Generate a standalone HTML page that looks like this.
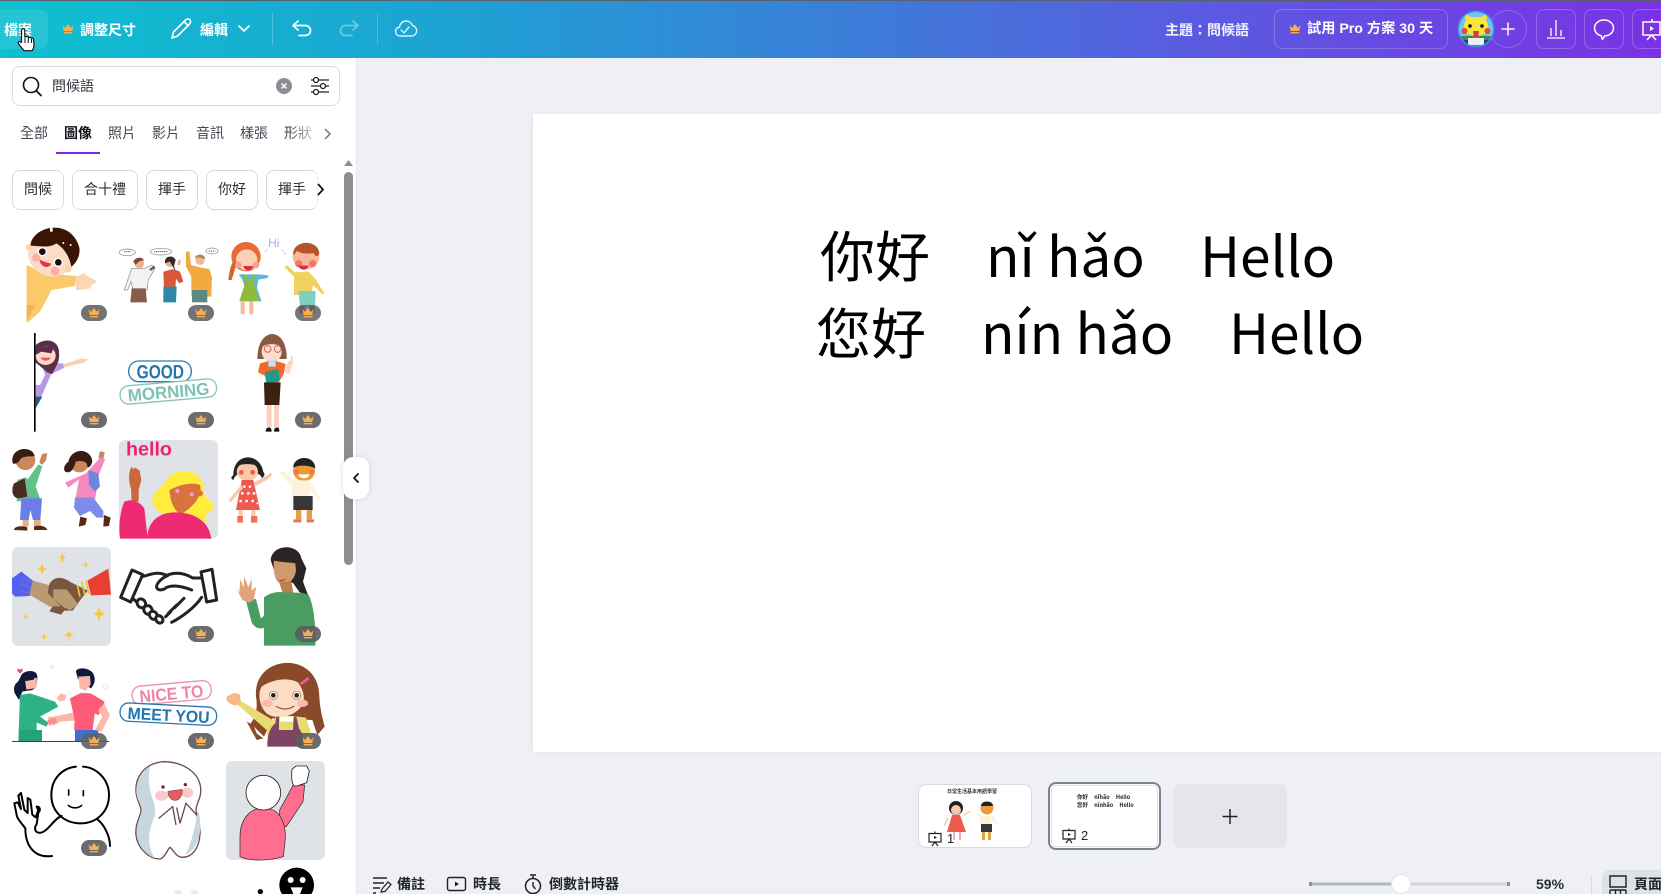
<!DOCTYPE html>
<html lang="zh-Hant"><head><meta charset="utf-8"><title>Canva 問候語</title>
<style>
html,body{margin:0;padding:0;width:1661px;height:894px;overflow:hidden;background:#eff0f5;font-family:"Liberation Sans","Noto Sans CJK TC",sans-serif;color:#0e1318}
.a{position:absolute;white-space:nowrap;line-height:1}
.b{position:absolute;box-sizing:border-box}
.t{font-weight:700;color:#fff;font-size:14px}
.cjk{font-family:"Noto Sans CJK TC","Liberation Sans",sans-serif}
.tab{font-size:14px;top:126px;color:#40474f}
.chip{position:absolute;top:170px;height:40px;border:1px solid #d6d9de;border-radius:8px;box-sizing:border-box;background:#fff;font-size:14px;line-height:36px;text-align:center;color:#2a3037}
.canvas span{position:absolute;white-space:nowrap;font-family:"Noto Sans CJK TC",sans-serif;font-size:55px;line-height:1;color:#000}
svg{position:absolute;overflow:visible}
.bot{font-size:14px;font-weight:700;top:877px;color:#20262c}
</style></head><body>

<!-- workspace -->
<div class="b" style="left:533px;top:114px;width:1128px;height:638px;background:#fff;box-shadow:0 0 6px rgba(60,70,90,.08)"></div>
<div class="canvas">
<span style="left:820px;top:226px">你好</span><span style="left:986px;top:226px">nǐ hǎo</span><span style="left:1200px;top:226px">Hello</span>
<span style="left:816px;top:303px">您好</span><span style="left:981px;top:303px">nín hǎo</span><span style="left:1229px;top:303px">Hello</span>
</div>

<!-- top bar -->
<div class="b" style="left:0;top:0;width:1661px;height:58px;background:linear-gradient(90deg,#0fc0cf 0%,#1aa6d2 24%,#3a7fd8 50%,#5a5be0 72%,#7a32e4 100%)"></div>
<div class="b" style="left:0;top:0;width:1661px;height:1px;background:#58606c"></div>
<div class="b" style="left:-6px;top:9px;width:54px;height:40px;border-radius:8px;background:rgba(255,255,255,.09)"></div>
<div class="a t" style="left:4px;top:23px">檔案</div>
<div class="a t" style="left:80px;top:23px">調整尺寸</div>
<div class="a t" style="left:200px;top:23px">編輯</div>
<div class="a t" style="left:1165px;top:23px;opacity:.93">主題：問候語</div>
<div class="b" style="left:1274px;top:9px;width:174px;height:40px;border:1px solid rgba(255,255,255,.22);border-radius:8px"></div>
<div class="a t" style="left:1307px;top:22px;font-size:14.2px">試用 Pro 方案 30 天</div>
<div class="b" style="left:1489px;top:10px;width:38px;height:38px;border:1px solid rgba(255,255,255,.22);border-radius:50%"></div>
<div class="b" style="left:1536px;top:9px;width:40px;height:40px;border:1px solid rgba(255,255,255,.22);border-radius:8px"></div>
<div class="b" style="left:1584px;top:9px;width:40px;height:40px;border:1px solid rgba(255,255,255,.22);border-radius:8px"></div>
<div class="b" style="left:1632px;top:9px;width:40px;height:40px;border:1px solid rgba(255,255,255,.22);border-radius:8px"></div>
<div class="b" style="left:272px;top:13px;width:1px;height:32px;background:rgba(255,255,255,.22)"></div>
<div class="b" style="left:377px;top:13px;width:1px;height:32px;background:rgba(255,255,255,.22)"></div>

<svg style="left:0;top:0" width="1661" height="60" viewBox="0 0 1661 60" fill="none">
<defs>
<g id="crown"><path d="M-5.5 -4 L-3 -1 L0 -5 L3 -1 L5.5 -4 L4.3 2 H-4.3Z M-4.2 3 H4.2 V4.4 H-4.2Z" fill="#f7ae57"/></g>
</defs>
<use href="#crown" x="68" y="29"/><use href="#crown" x="1295" y="29"/>
<path d="M172 38l1.500-6 12-12c1.500-1.500 3.300-1.300 4.300-.2s1.200 2.800-.2 4.200l-12 12z M184 21.500l4 4" stroke="#fff" stroke-width="1.600" stroke-linejoin="round"/>
<path d="M239 26l5 5 5-5" stroke="#fff" stroke-width="1.700" stroke-linecap="round" stroke-linejoin="round"/>
<path d="M298 21l-5 4.500 5 4.500 M293.500 25.500H305c3.500 0 5.500 2.300 5.500 5s-2 5-5.500 5h-6" stroke="#fff" stroke-width="1.700" stroke-linecap="round" stroke-linejoin="round"/>
<path d="M353 21l5 4.500-5 4.500 M357.500 25.500H346c-3.500 0-5.500 2.300-5.500 5s2 5 5.500 5h6" stroke="#fff" stroke-opacity=".38" stroke-width="1.700" stroke-linecap="round" stroke-linejoin="round"/>
<path d="M402 36h-2c-2.500 0-4.500-2-4.500-4.500 0-2.300 1.700-4.200 4-4.500 .5-3.500 3.300-6 6.700-6 3 0 5.500 1.900 6.400 4.600 2.400.4 4 2.600 4 5 0 3-2.200 5.400-5 5.400z" stroke="#fff" stroke-opacity=".85" stroke-width="1.400"/>
<path d="M401 30l3 3 5-6" stroke="#fff" stroke-opacity=".85" stroke-width="1.400" stroke-linecap="round"/>
<!-- avatar -->
<circle cx="1476" cy="29" r="18.500" fill="#3f8ff0"/>
<clipPath id="av"><circle cx="1476" cy="29" r="17"/></clipPath>
<g clip-path="url(#av)">
<rect x="1458" y="11" width="36" height="36" fill="#6ec6ee"/>
<rect x="1458" y="36" width="36" height="12" fill="#3f8a4f"/>
<path d="M1466 20l-3-8 8 5h10l8-5-3 8c3 4 3 10 0 13-4 3-16 3-20 0-3-3-3-9 0-13z" fill="#f8e33c"/>
<circle cx="1470" cy="26" r="1.800" fill="#111"/><circle cx="1482" cy="26" r="1.800" fill="#111"/>
<circle cx="1464.500" cy="31" r="3" fill="#e8463a"/><circle cx="1487.500" cy="31" r="3" fill="#e8463a"/>
<path d="M1473 31h6l-1 6h-4z" fill="#d83a4c"/>
<path d="M1468 38h16v7h-16z" fill="#eee"/><path d="M1460 40h8v8h-8zM1484 40h8v8h-8z" fill="#243c8c"/>
</g>
<path d="M1508 23v12M1502 29h12" stroke="#fff" stroke-opacity=".95" stroke-width="1.500" stroke-linecap="round"/>
<path d="M1547 38h18M1551 36V28M1556 36V20M1561 36V30" stroke="#fff" stroke-width="1.300"/>
<path d="M1604 20c5.500 0 9.500 3.700 9.500 8s-4 8-9 8l-2 3.500-1.500-3.800c-4-1-6.500-4.100-6.500-7.700 0-4.300 4-8 9.500-8z" stroke="#fff" stroke-width="1.500" stroke-linejoin="round"/>
<path d="M1643 22h17v13h-17z M1652 19v3 M1647 40l4.500-5 M1656 40l-4.500-5" stroke="#fff" stroke-width="1.500"/>
<path d="M1650 26l4 2.500-4 2.500z" fill="#fff"/>
</svg>

<!-- sidebar -->
<div class="b" style="left:0;top:58px;width:357px;height:836px;background:#fff;border-right:1px solid #e4e6ea"></div>
<div class="b" style="left:12px;top:66px;width:328px;height:40px;border:1px solid #d8dae0;border-radius:8px;background:#fff"></div>
<div class="a" style="left:52px;top:79px;font-size:14px;color:#2f353b">問候語</div>
<div class="a tab" style="left:20px">全部</div>
<div class="a tab" style="left:64px;color:#0e1318;font-weight:700">圖像</div>
<div class="a tab" style="left:108px">照片</div>
<div class="a tab" style="left:152px">影片</div>
<div class="a tab" style="left:196px">音訊</div>
<div class="a tab" style="left:240px">樣張</div>
<div class="a tab" style="left:284px;background:linear-gradient(90deg,#40474f 20%,#c4c6ca);-webkit-background-clip:text;background-clip:text;color:transparent">形狀</div>
<div class="b" style="left:56px;top:152px;width:44px;height:2px;background:#7d2ae8"></div>
<div class="chip" style="left:12px;width:52px">問候</div>
<div class="chip" style="left:72px;width:66px">合十禮</div>
<div class="chip" style="left:146px;width:52px">揮手</div>
<div class="chip" style="left:206px;width:52px">你好</div>
<div class="chip" style="left:266px;width:52px;border-right-color:#eee">揮手</div>
<div class="b" style="left:344px;top:172px;width:9px;height:393px;border-radius:5px;background:#8e8e8e"></div>

<svg style="left:0;top:0" width="357" height="894" viewBox="0 0 357 894" fill="none">
<circle cx="31" cy="85" r="7.500" stroke="#111" stroke-width="1.600"/><path d="M36.500 91l4.500 4.500" stroke="#111" stroke-width="1.800" stroke-linecap="round"/>
<circle cx="284" cy="86" r="8" fill="#8b8f94"/><path d="M281.500 83.500l5 5m0-5l-5 5" stroke="#fff" stroke-width="1.500"/>
<path d="M311 80h18M311 86h18M311 92h18" stroke="#222" stroke-width="1.300"/>
<circle cx="316" cy="80" r="2.500" fill="#fff" stroke="#222" stroke-width="1.300"/><circle cx="323" cy="86" r="2.500" fill="#fff" stroke="#222" stroke-width="1.300"/><circle cx="316" cy="92" r="2.500" fill="#fff" stroke="#222" stroke-width="1.300"/>
<path d="M325 129l5 5-5 5" stroke="#777" stroke-width="1.500"/>
<path d="M318 184l5 5.500-5 5.500" stroke="#111" stroke-width="1.700"/>
<path d="M344 166l4.500-6 4.500 6z" fill="#8e8e8e"/>

<!-- ZOOM 3 SPACE -->
<g transform="translate(0 215) scale(.33333)">
<!-- boy -->
<path d="M80 150l55 25 95 8-5 30-70 12-35 65-40 35z" fill="#fbc96a"/>
<path d="M80 270l25 0-25 50z" fill="#f2b552"/>
<path d="M228 186l27-13 4 8 29 16-2 8-10 4-6 12-42 5z" fill="#fdd6b6"/>
<ellipse cx="158" cy="112" rx="74" ry="72" fill="#fcdcc4"/><circle cx="86" cy="97" r="9" fill="#fcd0b0"/><circle cx="205" cy="162" r="10" fill="#fcd0b0"/>
<path d="M92 92c0-55 118-90 146 5 4 25-10 48-24 58-5-28-20-55-45-70-22 15-50 8-77 7z" fill="#3a1506"/>
<circle cx="127" cy="110" r="14" fill="#fff"/><circle cx="127" cy="110" r="10" fill="#111"/><circle cx="175" cy="142" r="14" fill="#fff"/><circle cx="175" cy="142" r="10" fill="#111"/>
<path d="M118 134c15 6 25 10 36 12-6 14-30 16-36-12z" fill="#df3648"/>
<circle cx="108" cy="128" r="12" fill="#f8b0a8"/><circle cx="165" cy="168" r="13" fill="#f8b0a8"/>
<rect x="150" y="38" width="8" height="12" fill="#fff"/><circle cx="190" cy="84" r="3" fill="#fff"/><circle cx="212" cy="90" r="3" fill="#fff"/>
<!-- three people -->
<ellipse cx="382" cy="112" rx="24" ry="10" fill="#fff" stroke="#888" stroke-width="2"/><ellipse cx="483" cy="110" rx="32" ry="10" fill="#fff" stroke="#888" stroke-width="2"/><ellipse cx="636" cy="108" rx="18" ry="9" fill="#fff" stroke="#888" stroke-width="2"/>
<path d="M372 110h20M462 110h42M626 108h20" stroke="#666" stroke-width="3" stroke-dasharray="4 2"/>
<circle cx="418" cy="146" r="14" fill="#e8b090"/><path d="M400 140c5-15 30-15 32-3-15-3-18 8-26 12z" fill="#7a4a30"/>
<path d="M395 160l40 0 20-10 10 10-20 35-4 30h-42l-6-25-10 25-10 0z" fill="#f2f2f2" stroke="#888" stroke-width="2"/>
<path d="M395 220h42l4 42h-50z" fill="#8a5a4a"/><path d="M450 165l14-10" stroke="#555" stroke-width="7"/>
<circle cx="510" cy="142" r="14" fill="#e8b090"/><path d="M495 145c-4-22 24-28 32-10l-5 18 5 15-10-15-8-14c-6 4-12 4-14 6z" fill="#3a2a2a"/>
<path d="M490 170l30-8 20 8 10 30-12 5-10-14-2 30h-34z" fill="#d9583a"/>
<path d="M490 215h40l-2 47h-38z" fill="#2f86a8"/><path d="M535 150l5-15" stroke="#e8b090" stroke-width="8"/>
<circle cx="600" cy="136" r="14" fill="#edbb95"/><path d="M584 130c5-16 30-14 32 2-12-2-20-8-32-2z" fill="#c08050"/>
<path d="M558 155l0-45 10 0 5 40 30 8 25 4 8 25-2 58h-60l0-60z" fill="#f2a93f"/>
<path d="M576 225h46v37h-46z" fill="#5d8a80"/>
<!-- hi kids -->
<text x="804" y="95" font-family="Liberation Sans" font-size="36" fill="#b8a4e6" transform="rotate(3 804 95)">Hi</text>
<path d="M794 112l10-10M858 120l-14-18" stroke="#c9bbe8" stroke-width="2"/>
<circle cx="738" cy="125" r="44" fill="#e96a35"/><ellipse cx="740" cy="135" rx="32" ry="32" fill="#fbd0b4"/>
<path d="M700 140c-8 10-12 30-15 55l10 0c5-15 10-35 15-45z" fill="#d8622f"/><circle cx="715" cy="150" r="10" fill="#f4a090"/><circle cx="768" cy="150" r="10" fill="#f4a090"/><path d="M730 153h30c-5 18-26 18-30 0z" fill="#dc2e3e"/>
<path d="M716 178h60l30 3-3 8-28 5-4 25 14 40h-64l14-40-8-25z" fill="#62b8d0"/>
<path d="M730 178l5 0 8 18 8 0 8-18 5 0-2 30 16 50h-60l16-50z" fill="#8dbb3a"/>
<path d="M722 258h12v40h-12zM748 258h12v40h-12z" fill="#f8b8a0"/>
<ellipse cx="918" cy="125" rx="40" ry="38" fill="#fbb898"/><path d="M880 120c-5-45 75-50 78-4-6 12-12 8-18-2-20 5-40 0-50-6-3 6-6 10-10 12z" fill="#b5552a"/><circle cx="896" cy="146" r="11" fill="#f07868"/><circle cx="938" cy="146" r="11" fill="#f07868"/><path d="M894 152h32c-6 18-26 14-32 0z" fill="#d82e3e"/>
<path d="M860 150l25 22 40-2 20 20 28 45-6 3-28-28-5 30h-52l0-55-28-28z" fill="#efd15f"/>
<path d="M895 228h52l-2 45h-45z" fill="#7dd0c0"/><path d="M898 273h16v23h-16zM928 273h16v23h-16z" fill="#a83030"/>
<!-- peek girl -->
<rect x="102" y="354" width="5" height="296" fill="#000"/>
<path d="M107 440l28 5 55 0 2 14-38 18-30 68-17 25z" fill="#b79be2"/><path d="M107 445l20 5 8 30-15 30-13 0z" fill="#fff"/>
<path d="M107 545h20l-20 35z" fill="#2f5a80"/><path d="M190 448l55-18 20 3-15 10-58 14z" fill="#fcd0b0"/>
<path d="M107 390c30-25 72-15 70 25 3 25-10 40-20 62l-15-5-35-30z" fill="#5a2f4a"/><ellipse cx="137" cy="422" rx="30" ry="28" fill="#fcd9c4"/><path d="M107 395l55 0-8 20-30-5-17 10z" fill="#5a2f4a"/><path d="M122 428h30c-5 12-25 12-30 0z" fill="#e85070"/>
<!-- good morning -->
<rect x="386" y="438" width="188" height="62" rx="30" fill="#fff" stroke="#2a7ab0" stroke-width="4"/>
<text x="410" y="491" font-family="Liberation Sans" font-weight="700" font-size="58" textLength="142" lengthAdjust="spacingAndGlyphs" fill="#2076ad">GOOD</text>
<g transform="rotate(-5 505 530)"><rect x="360" y="502" width="290" height="55" rx="26" fill="#fff" stroke="#86c5b8" stroke-width="4"/>
<text x="383" y="549" font-family="Liberation Sans" font-weight="700" font-size="52" textLength="245" lengthAdjust="spacingAndGlyphs" fill="#7ec2b2">MORNING</text></g>
<!-- teacher -->
<path d="M772 432c0-100 90-100 88 0z" fill="#8a5a40"/><ellipse cx="815" cy="410" rx="30" ry="32" fill="#fcdccc"/><path d="M785 395c10-25 50-25 60 0-20-10-40-10-60 0z" fill="#8a5a40"/>
<circle cx="803" cy="402" r="10" fill="none" stroke="#c85050" stroke-width="2.500"/><circle cx="833" cy="402" r="10" fill="none" stroke="#c85050" stroke-width="2.500"/>
<path d="M780 445l30-8 15 0 32 10-6 30-15 25h-36l-6-20-20-10z" fill="#f26a2a"/><path d="M805 435h22v20h-22z" fill="#c9dff0"/>
<path d="M795 470l40-7 4 35-40 12z" fill="#1f9a8f"/><path d="M792 502h50l-4 68h-44z" fill="#3d2010"/>
<path d="M800 570h15v68h-15zM822 570h15v68h-15z" fill="#fbcfc0"/><path d="M797 650c0-10 5-12 10-12s8 4 8 12zM822 650c0-10 5-12 10-12s6 4 6 12z" fill="#111"/>
<path d="M852 470l12-30 10-5-4-10 7-4 3 18-12 40z" fill="#fcd8c4"/>
<!-- kids backpack -->
<circle cx="76" cy="735" r="30" fill="#c9875a"/><path d="M38 745c-10-50 60-55 66-22-20 2-32 0-42 8-5 12-16 18-24 14z" fill="#3a1d12"/>
<path d="M52 795l25-8 6 6 32-45 12 6-20 60 14 40-3 5h-68z" fill="#62c088"/><path d="M118 742l8-25 16-3-4 22-12 14z" fill="#c9875a"/>
<path d="M42 805c-10 20-5 45 15 45l25-5-8-55z" fill="#4a2b22"/><path d="M64 850h62l-5 65h-22l-8-30-5 30h-26z" fill="#6a7de8"/>
<path d="M68 915h18v20h-18zM102 915h20v20h-20z" fill="#e4b080"/><path d="M42 945c0-12 25-14 40-8v10zM102 935c12-6 35-4 40 10h-40z" fill="#5a2a18"/>
<circle cx="238" cy="742" r="30" fill="#c9875a"/><path d="M195 770c-8-15 5-25 10-30 10-45 70-40 72 0-5 15-10 20-15 15 0-15-15-20-35-15-5 22-15 38-32 30z" fill="#3a1d12"/>
<path d="M258 775l45-50 12 8-20 50-10 75h-60l12-65-32 25-10-15z" fill="#f58ac0"/><path d="M295 728l5-20 14 4-4 20z" fill="#c9875a"/>
<path d="M265 765l30 10 5 40-15 15-18-20z" fill="#6d86e0"/>
<path d="M225 848h55l30 40 0 20-20 0-20-20-30 15-18-25z" fill="#7d8ce8"/>
<path d="M236 935l5-30 20 5-5 20zM310 935l2-35 20 8-5 25z" fill="#5a2a18"/>
<!-- hello card -->
<rect x="357" y="675" width="297" height="296" rx="18" fill="#dfe2e6"/>
<text x="378" y="722" font-family="Liberation Sans" font-weight="700" font-size="58" textLength="138" lengthAdjust="spacingAndGlyphs" fill="#e8266f">hello</text>
<path d="M395 860l-2-40c-8-20-8-50 2-65l6 8 4-6 8 6 6 4 5 28-8 30v35z" fill="#c9683e"/>
<path d="M373 860c25-10 45 0 60 20l10 91H360c-5-40 0-80 13-111z" fill="#ee2a72"/>
<path d="M456 860c2-30 25-35 40-60 15-30 75-50 105-10 15 20 5 45 20 60 15 12 25 25 20 32-15 12-30 12-20 40l-120-10c-20-25-40-30-45-52z" fill="#ffec3d"/>
<path d="M510 825c25-15 65-25 90-15 8 25-10 60-60 90-20-20-32-45-30-75z" fill="#d9733e"/>
<circle cx="515" cy="830" r="7" fill="#d9733e"/><circle cx="600" cy="835" r="9" fill="#d9733e"/>
<path d="M442 971c0-55 40-85 100-78 50 5 85 30 92 78z" fill="#ee2a72"/>
<circle cx="532" cy="828" r="6" fill="#f5a0d0"/><circle cx="575" cy="838" r="6" fill="#f5a0d0"/>
<!-- dress kids -->
<path d="M700 795c-8-3-8-10 0-14 0-70 80-70 90-10 5 4 5 12-4 18-10-25-75-30-86 6z" fill="#222"/>
<ellipse cx="742" cy="770" rx="32" ry="28" fill="#f8c8a8"/><path d="M705 755c12-25 65-25 75 0-20-10-55-10-75 0z" fill="#222"/><circle cx="724" cy="772" r="7" fill="#f05a50"/><circle cx="758" cy="772" r="7" fill="#f05a50"/>
<path d="M725 795h35l20 90h-72z" fill="#ef5a50"/>
<g fill="#fff"><circle cx="733" cy="815" r="4"/><circle cx="750" cy="815" r="4"/><circle cx="727" cy="835" r="4"/><circle cx="745" cy="835" r="4"/><circle cx="762" cy="835" r="4"/><circle cx="722" cy="858" r="4"/><circle cx="740" cy="858" r="4"/><circle cx="758" cy="858" r="4"/><circle cx="772" cy="865" r="3"/></g>
<path d="M725 808l-40 48 8 5 35-40zM762 802l40-22 10-8 4 8-12 12-38 22z" fill="#f8c8a8"/>
<path d="M716 885h12v20h-12zM754 885h12v20h-12z" fill="#f8c8a8"/><path d="M712 903h17v20h-17zM753 903h19v20h-19z" fill="#f0705a"/>
<ellipse cx="912" cy="768" rx="33" ry="30" fill="#ec9a35"/><path d="M880 758c0-38 65-40 66 2-15-8-48-12-66-2z" fill="#222"/><path d="M895 778h34c-5 16-30 16-34 0z" fill="#fff"/><circle cx="890" cy="770" r="7" fill="#ef7060"/><circle cx="935" cy="770" r="7" fill="#ef7060"/>
<path d="M838 772l12-4 25 20 25 8 30 0 25 45 10 8-8 6-25-30-6 20h-50v-35l-15-10z" fill="#fdf3dc"/>
<path d="M880 843h58v42h-58z" fill="#383838"/><path d="M888 885h16v28h-16zM920 885h16v28h-16z" fill="#e8a040"/><path d="M880 913h24v9h-24zM920 913h22v9h-22z" fill="#f0705a"/>
</g>

<!-- ZOOM 4 SPACE -->
<g transform="translate(0 540) scale(.33333)">
<rect x="36" y="21" width="297" height="297" rx="18" fill="#dfe2e6"/>
<path d="M36 115l28-20 36 28-10 45-45 2-9-10z" fill="#5161f5"/><path d="M62 110l35 18M58 130l34 14M54 150l30 10" stroke="#8a6fa8" stroke-width="3"/>
<path d="M98 122l80 22 55 35-35 30-50-10-60-35z" fill="#ba9a72"/>
<path d="M148 132c15-25 40-22 65-5l50 25-20 25-25 35-25 0-10 12-35-10 10-15 25 0-40-40z" fill="#7a5540"/>
<path d="M160 148l40 0 35 45-25 18-20-10-30-25z" fill="#ba9a72"/>
<path d="M232 135l8 35M245 125l10 42M258 122l8 40" stroke="#efc62e" stroke-width="5"/>
<path d="M262 122l63-36 8 78-60 2z" fill="#e84030"/>
<g fill="#f8c840"><path d="M187 38l5 13 8-1-8 6-5 16-5-16-9-6 9 1z"/><path d="M126 70l5 13 10 4-10 4-5 14-5-14-10-4 10-4z"/><path d="M297 198l5 17 12 7-12 6-5 18-5-18-12-6 12-7z"/><path d="M133 280l3 8 8 2-8 2-3 9-3-9-8-2 8-2z"/><path d="M77 222l3 6 7 2-7 3-3 6-3-6-7-3 7-2z"/><circle cx="257" cy="74" r="5"/><circle cx="207" cy="285" r="7"/></g>
<path d="M257 62v24M245 74h24M207 268v34M190 285h34" stroke="#f8c840" stroke-width="2"/>
<!-- handshake line -->
<g fill="#fff" stroke="#222" stroke-width="9" stroke-linejoin="round" stroke-linecap="round">
<path d="M420 105l28 8c20-8 40-12 55-2 20-10 50-12 70 2l30-8 10 70-30 8-80 65c-15 8-30-5-45-10l-25-30-25-20-8-30-10-3z" stroke="none"/>
<path d="M396 90l32 14-36 82-30-14z"/><path d="M603 96l33-8 14 92-30 6z"/>
<path d="M425 110c25-5 45-18 75-4 30-12 55-6 78 8l26 0"/>
<path d="M503 107c-20 8-35 25-33 35s20 10 30 0c25-10 55 0 75 8"/>
<path d="M398 175l20 18M605 172c-20 30-60 60-90 75" fill="none"/>
<path d="M552 175l-28 28M530 195l-25 25M512 215l-15 15" fill="none"/>
<ellipse cx="424" cy="190" rx="12" ry="14" transform="rotate(-40 424 190)"/><ellipse cx="444" cy="210" rx="12" ry="14" transform="rotate(-40 444 210)"/><ellipse cx="460" cy="226" rx="11" ry="13" transform="rotate(-40 460 226)"/><ellipse cx="478" cy="238" rx="10" ry="12" transform="rotate(-40 478 238)"/>
</g>
<!-- woman wave -->
<path d="M812 60c5-50 85-50 92-5l15 30-10 40 15 40-25-8-20-28-22-8-35-30z" fill="#2a2522"/>
<path d="M822 62c20 5 48 5 64 8l2 22c-5 32-28 44-46 40-18-8-24-40-20-70z" fill="#cf9a6c"/><path d="M835 118c8 4 16 2 22-4-2 12-18 14-22 4z" fill="#c8402f"/>
<path d="M838 128l36-4 6 35-30 8z" fill="#b98050"/>
<path d="M792 172c20-14 40-18 60-15 30 2 55-2 74 8 15 30 22 90 20 152H792z" fill="#4a9d62"/>
<path d="M753 180l16 62c10 14 22 8 34-5" stroke="#4a9d62" stroke-width="30" stroke-linejoin="round"/>
<path d="M706 140l12 18 3-40 10 24 2-32 12 32 10-26 0 36 14-12-8 40-14 8-20-8z" fill="#e2a37a"/>
<!-- green/pink pair -->
<path d="M52 385l8 4 8-4v8l-8 8-8-8z" fill="#e8506a"/><path d="M160 375l-8 6 8 6" stroke="#ccd" stroke-width="2"/><circle cx="317" cy="439" r="6" stroke="#f0c8d0" stroke-width="2"/>
<path d="M62 410c5-20 50-25 50 0 0 25-5 35-15 40l-30 5-10 25c-5-10-15-18-15-32 0-18 12-20 15-28z" fill="#0e1a3c"/><path d="M75 420c0-5 30-12 36-4l-2 28-30 5z" fill="#fbb8a8"/><path d="M72 408l32-4-2 15-30 5z" fill="#0e1a3c"/>
<path d="M60 465l30-5 30 10 45 15 10 15-55 30 25 18-5 12-30-12 0 55H55z" fill="#2eb184"/><path d="M58 570h68v34H58z" fill="#25a378"/>
<path d="M170 475l12-15 18 5-5 15-15 5z" fill="#fbb8a8"/>
<path d="M145 530h15l25-5 40-8 0 25-45 3-20 12-15-15z" fill="#fbb8a8"/><path d="M142 540l25-8 5 15-25 10z" fill="#f89090"/>
<path d="M228 395c0-15 50-15 55 15 5 15-5 30-10 35l-25-15-15-15z" fill="#0e1a3c"/><path d="M235 410l35-2 2 25-15 20-18-8z" fill="#fbb8a8"/><path d="M240 458h25l-5 20-15-3z" fill="#c8d2e8"/>
<path d="M210 475l30-15 32 0 42 25-18 40-12-5-6 50h-56l2-30z" fill="#ff5a78"/><path d="M225 570h70v34h-70z" fill="#3d6fd0"/>
<path d="M312 490l18 35-25 50-20-5 22-40-12-20z" fill="#fbb8a8"/>
<rect x="36" y="603" width="292" height="3" fill="#34444e"/>
<!-- nice -->
<g transform="rotate(-5 515 458)"><rect x="396" y="430" width="238" height="56" rx="26" fill="#fff" stroke="#f08fae" stroke-width="4"/>
<text x="418" y="479" font-family="Liberation Sans" font-weight="700" font-size="52" textLength="192" lengthAdjust="spacingAndGlyphs" fill="#ee85a8">NICE TO</text></g>
<g transform="rotate(3 505 524)"><rect x="360" y="495" width="290" height="55" rx="26" fill="#fff" stroke="#2a7ab0" stroke-width="4"/>
<text x="383" y="543" font-family="Liberation Sans" font-weight="700" font-size="50" textLength="246" lengthAdjust="spacingAndGlyphs" fill="#2076ad">MEET YOU</text></g>
<!-- brown girl -->
<path d="M768 470c-10-130 190-140 190 0 2 40 10 65 16 90l-22 25-15-45-120-5-25 55-40-40c15-20 22-45 16-80z" fill="#8a4a2a"/>
<path d="M785 440c30-22 80-30 110-12 12 20 20 35 15 62-25 45-85 50-110 30-18-15-30-55-15-80z" fill="#fcdcc4"/><path d="M790 430c20-45 90-55 125-5-50-25-90-15-125 5z" fill="#8a4a2a"/>
<circle cx="820" cy="466" r="12" fill="#fff" stroke="#8a6a50" stroke-width="2"/><circle cx="820" cy="466" r="7" fill="#3a2010"/><circle cx="890" cy="466" r="12" fill="#fff" stroke="#8a6a50" stroke-width="2"/><circle cx="890" cy="466" r="7" fill="#3a2010"/>
<path d="M828 498c15 12 38 12 54 0" stroke="#7a3a20" stroke-width="3"/><ellipse cx="802" cy="490" rx="16" ry="11" fill="#f8b8b0"/><ellipse cx="908" cy="490" rx="16" ry="11" fill="#f8b8b0"/>
<path d="M902 432l24-18" stroke="#ee5a9c" stroke-width="8"/>
<path d="M706 488l12-8 100 60 15-12 45 0 40 5 15 45-30 32H805l-5-40z" fill="#e6dc72"/><path d="M840 530h45v15h-45z" fill="#fff"/>
<path d="M802 620c0-30 5-55 24-70l3-20h8l0 40h42l2-40h8l8 35c15 20 15 45 10 55z" fill="#7e4464"/>
<path d="M680 470l22-12 18 6 2 18-12 15-15-3-15-12z" fill="#f7b888"/>
<path d="M740 545l20 10 10 25 20 15-20 5-30-55z" fill="#8a4a2a"/>
<!-- stick figure -->
<g fill="none" stroke="#000" stroke-width="6" stroke-linecap="round" stroke-linejoin="round">
<path d="M228 680c-40 4-74 35-74 85 0 50 38 85 88 85 48 0 85-35 85-85 0-45-35-82-78-85"/>
<path d="M206 750v15M250 752v15M205 796c10 10 30 10 40 0" stroke-width="5"/>
<path d="M185 828c-25 8-45 55-70 50-12-3-12-18-5-25l5-35c8-8 5-18-5-18l5 10-8 22-10-8-6-45-8-5v45l-10-10-10-50-8 8 8 40-10-20-10 3 8 40c5 12 18 25 25 35 0 50 25 90 80 83"/>
<path d="M292 838c20 15 38 50 38 80"/>
</g>
<!-- ghost -->
<path d="M490 665c-60 5-85 50-82 90 2 30 16 40 15 60-5 20-18 40-15 70 4 40 40 72 70 72 15 0 25-30 32-35 8 5 18 30 38 30 30 0 50-30 52-70 2-30-12-55-12-75 5-25 16-35 14-62-3-45-50-80-112-80z" fill="#fff" stroke="#6e4a4a" stroke-width="4"/>
<path d="M450 680c-30 20-45 50-40 85 3 18 15 30 15 48-5 20-18 45-15 72 4 35 30 60 55 70-20-30-25-70-5-115 10-25 5-45-5-70-10-35-10-65-5-90z" fill="#c6d7e0"/>
<path d="M595 810c8 35 10 70-5 100-8 15-20 30-35 35 20-30 30-90 40-135z" fill="#c6d7e0"/>
<circle cx="489" cy="741" r="5" fill="#5e2a2a"/><circle cx="556" cy="734" r="5" fill="#5e2a2a"/><ellipse cx="485" cy="767" rx="20" ry="15" fill="#f9c8c8"/><ellipse cx="562" cy="758" rx="18" ry="15" fill="#f9c8c8"/>
<path d="M504 754l42-6c2 15-5 32-20 33-14 0-22-12-22-27z" fill="#ea5a66" stroke="#6e4a4a" stroke-width="2"/>
<path d="M476 835l42-35 10 55M590 825l-32-35-18 60-10-48" stroke="#6e4a4a" stroke-width="4" fill="none"/>
<!-- card pink person -->
<rect x="678" y="663" width="297" height="297" rx="18" fill="#dfe2e6"/>
<path d="M880 735l34 0-5 50-50 75-20 0 0-50z" fill="#ff6d8f" stroke="#222" stroke-width="2"/>
<path d="M882 738c-8-10-8-30-6-50l12-10 32 0 8 15-8 35-30 10z" fill="#fff" stroke="#222" stroke-width="2.500"/>
<path d="M720 890c0-50 30-90 75-85 50 0 65 55 60 100l-5 45c-40 12-100 15-130 0z" fill="#ff6d8f" stroke="#222" stroke-width="2"/>
<circle cx="790" cy="758" r="52" fill="#fff" stroke="#222" stroke-width="2.500"/>
<!-- row 7 partial -->
<circle cx="890" cy="1035" r="52" fill="#000"/><circle cx="872" cy="1020" r="9" fill="#fff"/><circle cx="908" cy="1020" r="9" fill="#fff"/><path d="M872 1042h36l-8 20h-20z" fill="#fff"/>
<circle cx="781" cy="1055" r="8" fill="#000"/><circle cx="535" cy="1062" r="12" fill="#fde4da"/><circle cx="584" cy="1062" r="12" fill="#fde4da"/>
</g>

<!-- badges -->
<g>
<g><rect x="81" y="305" width="26" height="16" rx="8" fill="#696b6d" fill-opacity=".95"/><use href="#crown" x="94" y="313"/></g>
<g><rect x="188" y="305" width="26" height="16" rx="8" fill="#696b6d" fill-opacity=".95"/><use href="#crown" x="201" y="313"/></g>
<g><rect x="295" y="305" width="26" height="16" rx="8" fill="#5f6163" fill-opacity=".85"/><use href="#crown" x="308" y="313"/></g>
<g><rect x="81" y="412" width="26" height="16" rx="8" fill="#696b6d"/><use href="#crown" x="94" y="420"/></g>
<g><rect x="188" y="412" width="26" height="16" rx="8" fill="#696b6d"/><use href="#crown" x="201" y="420"/></g>
<g><rect x="295" y="412" width="26" height="16" rx="8" fill="#696b6d"/><use href="#crown" x="308" y="420"/></g>
<g><rect x="188" y="626" width="26" height="16" rx="8" fill="#696b6d"/><use href="#crown" x="201" y="634"/></g>
<g><rect x="295" y="626" width="26" height="16" rx="8" fill="#5a5c5e" fill-opacity=".9"/><use href="#crown" x="308" y="634"/></g>
<g><rect x="81" y="733" width="26" height="16" rx="8" fill="#5f6163" fill-opacity=".9"/><use href="#crown" x="94" y="741"/></g>
<g><rect x="188" y="733" width="26" height="16" rx="8" fill="#696b6d"/><use href="#crown" x="201" y="741"/></g>
<g><rect x="295" y="733" width="26" height="16" rx="8" fill="#5a5c5e" fill-opacity=".9"/><use href="#crown" x="308" y="741"/></g>
<g><rect x="81" y="840" width="26" height="16" rx="8" fill="#696b6d"/><use href="#crown" x="94" y="848"/></g>
</g>
</svg>

<!-- collapse handle -->
<div class="b" style="left:343px;top:457px;width:26px;height:42px;background:#fff;border-radius:10px;box-shadow:0 0 6px rgba(30,40,60,.14)"></div>
<svg style="left:343px;top:457px" width="26" height="42" fill="none"><path d="M15 17l-4 4 4 4" stroke="#111" stroke-width="1.800" stroke-linecap="round" stroke-linejoin="round"/></svg>

<!-- hand cursor -->
<svg style="left:15px;top:27px" width="24" height="26" viewBox="0 0 24 26"><path d="M7 2c1.300-1 2.800 0 2.800 1.500V10l1.200-.3c1-.3 2 0 2.400.8.900-.5 2.100-.2 2.600.7 1-.4 2.200 0 2.500 1l.5 6c0 2.500-.9 4-2 5.500H9c-1.500-2-3.500-4-5.500-7-.8-1.400.5-2.800 2-2l1 .8V3.500C6.500 3 6.700 2.300 7 2z" fill="#fff" stroke="#111" stroke-width="1.200" stroke-linejoin="round"/><path d="M10 11v5M13.300 11v5M16.500 12v4" stroke="#111" stroke-width="1"/></svg>

<!-- bottom page button bg -->
<div class="b" style="left:1602px;top:870px;width:59px;height:24px;border-radius:8px 0 0 0;background:#dfe1e8"></div>

<!-- thumbs -->
<div class="b" style="left:918px;top:784px;width:114px;height:64px;background:#fff;border:1px solid #d7dae0;border-radius:8px"></div>
<div class="b" style="left:1048px;top:782px;width:113px;height:68px;background:#fff;border:2px solid #7b838c;border-radius:8px;box-shadow:inset 0 0 0 1px #fff,inset 0 0 0 2px #dcdfe4"></div>
<div class="b" style="left:1173px;top:784px;width:114px;height:64px;background:#e4e6ec;border-radius:8px"></div>
<div class="a cjk" style="left:947px;top:789px;font-size:5px;font-weight:700;color:#333">日常生活基本用語學習</div>
<div class="a cjk" style="left:1077px;top:795px;font-size:5.500px;font-weight:700;color:#222;word-spacing:5px">你好 nǐhǎo Hello</div>
<div class="a cjk" style="left:1077px;top:803px;font-size:5.500px;font-weight:700;color:#222;word-spacing:5px">您好 nínhǎo Hello</div>
<div class="a" style="left:947px;top:832px;font-size:13px;color:#222">1</div>
<div class="a" style="left:1081px;top:829px;font-size:13px;color:#222">2</div>
<svg style="left:0;top:770px" width="1661" height="124" viewBox="0 770 1661 124" fill="none">
<!-- thumb kids -->
<ellipse cx="956" cy="808" rx="7" ry="7" fill="#222"/><ellipse cx="956" cy="810" rx="5" ry="5" fill="#f8c8a8"/><path d="M952 815h8l6 17h-19z" fill="#ef5a50"/><path d="M953 832h2v8h-2zM959 832h2v8h-2z" fill="#f5b0a0"/>
<path d="M964 815l6-4M948 818l-4 8" stroke="#f8c8a8" stroke-width="1.500"/>
<circle cx="987" cy="808" r="6.500" fill="#ec9a35"/><path d="M981 806c0-6 12-6 12 0z" fill="#222"/><path d="M975 811l7 5h11l5 9-7-5v6h-11v-9z" fill="#fdf3dc"/><path d="M981 824h11v8h-11z" fill="#383838"/><path d="M982 832h3v8h-3zM988 832h3v8h-3z" fill="#e8a040"/>
<!-- present icons -->
<g stroke="#222" stroke-width="1.200"><path d="M929 833.500h12v8.500h-12zM935 831.500v2M932 846l3-4 3 4M1063 830.500h12v8.500h-12zM1069 828.500v2M1066 843l3-4 3 4"/></g>
<path d="M934 836l3 1.500-3 1.500zM1068 833l3 1.500-3 1.500z" fill="#222"/>
<!-- plus -->
<path d="M1230 809v15M1222.500 816.500h15" stroke="#222" stroke-width="1.500"/>
<!-- notes -->
<path d="M373 878h14M373 883h11M373 888h7M373 893h3" stroke="#222" stroke-width="1.500"/><path d="M381 892l1-3 6-7 3 2.500-6 7z" stroke="#222" stroke-width="1.200"/>
<rect x="447.500" y="877.500" width="18" height="13" rx="2" stroke="#222" stroke-width="1.400"/><path d="M455 881.500l4 2.500-4 2.500z" fill="#222"/>
<circle cx="533" cy="886" r="7.500" stroke="#222" stroke-width="1.500"/><path d="M530 875h6M533 875v3M533 882v4l2.500 3" stroke="#222" stroke-width="1.400"/>
<!-- slider -->
<rect x="1310" y="882.500" width="90" height="3" rx="1.500" fill="#aeb6bf"/><rect x="1400" y="882.500" width="109" height="3" rx="1.500" fill="#d0d4da"/>
<rect x="1309" y="882" width="3" height="4" fill="#8a9098"/><rect x="1507" y="882" width="3" height="4" fill="#8a9098"/>
<circle cx="1401" cy="884" r="9.500" fill="#fff" stroke="#e3e5ea" stroke-width="1"/>
<rect x="1591" y="876" width="1" height="18" fill="#d8dbe0"/>
<path d="M1610 876h16v11h-16zM1610 890h16M1610 890v6M1615.500 890v6M1620.500 890v6M1626 890v6" stroke="#222" stroke-width="1.400"/>
</svg>
<div class="a bot" style="left:397px">備註</div>
<div class="a bot" style="left:473px">時長</div>
<div class="a bot" style="left:549px">倒數計時器</div>
<div class="a" style="left:1536px;top:877px;font-size:14px;font-weight:700;color:#2a3037">59%</div>
<div class="a bot" style="left:1634px">頁面</div>
</body></html>
